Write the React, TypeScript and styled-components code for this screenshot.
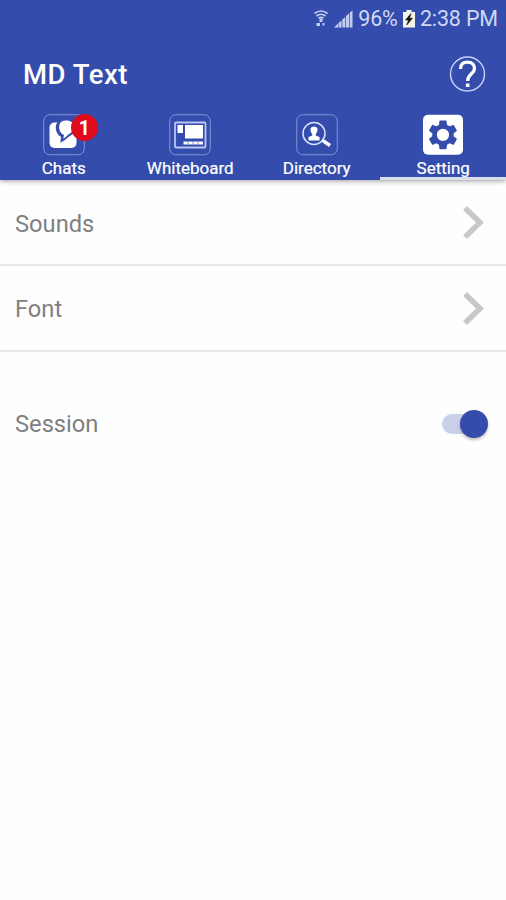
import React from "react";
import styled, { createGlobalStyle } from "styled-components";

const BLUE = "#344dad";

const GlobalStyle = createGlobalStyle`
  * { box-sizing: border-box; }
  body { margin: 0; background: #fefefe; font-family: Roboto, "Liberation Sans", sans-serif; }
  svg { display: block; flex: none; }
`;

const Screen = styled.main`
  width: 506px;
  height: 900px;
  overflow: hidden;
  background: #fefefe;
`;

const Header = styled.header`
  height: 180px;
  background: ${BLUE};
  box-shadow: 0 1px 5px rgba(0, 0, 0, 0.4);
  display: flex;
  flex-direction: column;
`;

const StatusBar = styled.div`
  height: 37px;
  padding: 0 8px 0 313px;
  display: flex;
  align-items: center;
  justify-content: space-between;
  color: #d0d8f5;
`;

const StatusText = styled.span`
  font-size: 21.5px;
  line-height: 37px;
  white-space: nowrap;
  letter-spacing: -0.15px;
`;

const TitleBar = styled.div`
  height: 75px;
  padding: 0 20px 0 23px;
  display: flex;
  align-items: center;
  justify-content: space-between;
`;

const Title = styled.h1`
  margin: 0;
  font-size: 27.5px;
  font-weight: 500;
  line-height: 75px;
  letter-spacing: 0.5px;
  color: #fff;
`;

const HelpButton = styled.button`
  padding: 0;
  border: 0;
  background: none;
`;

const Tabs = styled.nav`
  height: 68px;
  display: grid;
  grid-template-columns: repeat(4, 126.5px);
`;

const Tab = styled.div<{ $active?: boolean }>`
  padding: 2px 0 0 1px;
  display: flex;
  flex-direction: column;
  align-items: center;
  box-shadow: ${(p) => (p.$active ? "inset 0 -3px 0 #d9dcea" : "none")};
`;

const IconWrap = styled.div`
  position: relative;
  height: 42px;
`;

const TabLabel = styled.span`
  height: 22px;
  line-height: 25px;
  font-size: 17px;
  color: #fff;
  -webkit-text-stroke: 0.2px #fff;
`;

const Badge = styled.span`
  position: absolute;
  left: 28px;
  top: 0;
  width: 27px;
  height: 27px;
  border-radius: 50%;
  background: #df0b1c;
  color: #fff;
  font-size: 19.5px;
  font-weight: 700;
  line-height: 29px;
  text-align: center;
`;

const Row = styled.div<{ $height: number; $divided?: boolean }>`
  height: ${(p) => p.$height}px;
  padding: ${(p) => (p.$divided ? "1px 18px 0 15px" : "0 18px 2px 15px")};
  display: flex;
  align-items: center;
  justify-content: space-between;
  border-bottom: ${(p) => (p.$divided ? "2px solid #e7e7e7" : "0")};
`;

const RowLabel = styled.span<{ $shift?: number }>`
  padding-top: ${(p) => p.$shift ?? 0}px;
  font-size: 23.7px;
  color: #808080;
`;

const Gap = styled.div`
  height: 30px;
`;

const Track = styled.div`
  width: 46px;
  height: 20px;
  display: flex;
  align-items: center;
  justify-content: flex-end;
  border-radius: 10px;
  background: linear-gradient(90deg, #cbd0e9 36px, transparent 36px);
`;

const Thumb = styled.div`
  width: 28px;
  height: 28px;
  border-radius: 50%;
  background: ${BLUE};
  box-shadow: 0 2px 3px rgba(0, 0, 0, 0.25);
`;

const Frame = () => (
  <rect x="0.75" y="0.75" width="40.5" height="40" rx="6" fill="none" stroke="#8493d6" strokeWidth="1" />
);

const WifiIcon = () => (
  <svg width="16" height="19" viewBox="0 0 16 19" fill="none" stroke="#c3ccef">
    <path d="M1.5 4.500Q8 -.5 14.5 4.500M3.500 7Q8 3.500 12.500 7M5.500 9.300Q8 7.500 10.500 9.300" strokeWidth="1.700" />
    <path d="M6.500 9.500h3v3.500h-3zM3.500 14h3.500v3H3.500zM9.500 14h2v2.500h-2z" fill="#c3ccef" stroke="none" />
  </svg>
);

const SignalIcon = () => (
  <svg width="19" height="18" viewBox="0 0 19 18" fill="#c3ccef">
    <path d="M0 17.500l4-4v4zM4.500 13l3-2.500v7h-3zM8.300 9.500l3-2.500v10.500h-3zM12 6l3-2.500v14h-3zM15.700 2.500L18.500.5v17h-2.800z" />
  </svg>
);

const BatteryIcon = () => (
  <svg width="12" height="18" viewBox="0 0 12 18">
    <path d="M3.500 0h5v2H12v15.500H0V2h3.500z" fill="#f4f5e9" />
    <path d="M8 3.500L2.500 10h3L3.800 15 9.500 8.200H6.600z" fill="#111" stroke="#111" strokeWidth=".6" />
  </svg>
);

const HelpIcon = () => (
  <svg width="37" height="38" viewBox="0 0 37 38" fill="none">
    <circle cx="18.500" cy="18" r="17" stroke="#c9d2f7" strokeWidth="1.400" />
    <path d="M11.500 13C11.500 8 14 6.200 18.500 6.200C23 6.200 25.500 8.800 25.500 12.500C25.500 18 18.700 17.800 18.700 25" stroke="#fff" strokeWidth="3.300" />
    <path d="M16.800 27.500h3.700v3.500h-3.700z" fill="#fff" />
  </svg>
);

const ChatsIcon = () => (
  <svg width="42" height="42" viewBox="0 0 42 42">
    <Frame />
    <rect x="6.500" y="8.500" width="27" height="25.500" rx="5" fill="#fff" />
    <path d="M23 5C14 5 12 11 13 16C13.800 19.500 15.500 21.500 18 22.800L17.300 28.500C21.500 26.800 24 24.500 26 22.500C31 20 33.500 16 33 11C32 7 28 5 23 5z" fill={BLUE} />
    <path d="M23 6.500C16.500 6.500 15.500 11.500 16.500 15.500C17.300 18.800 19 20.300 21 21L20.300 24.500C22.500 23.500 24 22 25 20.700C29 19 31 15.500 30.500 11C30 8 27 6.500 23 6.500z" fill="#fff" />
  </svg>
);

const WhiteboardIcon = () => (
  <svg width="42" height="42" viewBox="0 0 42 42">
    <Frame />
    <rect x="6" y="8.500" width="30.500" height="25" rx="1" fill="none" stroke="#b9c5f5" strokeWidth="1.800" />
    <path d="M8.500 11h5.500v8H8.500zM16 11h18v13.500H16zM14.500 27.500h19.500v3H14.500z" fill="#fff" />
    <path d="M19 27.500v3M24 27.500v3M29 27.500v3" stroke={BLUE} strokeWidth=".6" />
  </svg>
);

const DirectoryIcon = () => (
  <svg width="42" height="42" viewBox="0 0 42 42" fill="none">
    <Frame />
    <circle cx="18" cy="19.500" r="11" stroke="#dae1ff" strokeWidth="1.500" />
    <path d="M26 26l2 2" stroke="#fff" strokeWidth="2" />
    <path d="M27.500 27l6.500 4.500" stroke="#fff" strokeWidth="3.500" />
    <path d="M14.500 15C14.500 11.500 21.500 11.500 21.500 15C21.500 17.500 20.800 19 19.700 20.200V21.500L23.500 23V26.500H12.500V23L16.300 21.500V20.200C15.200 19 14.500 17.500 14.500 15z" fill="#fff" />
  </svg>
);

const SettingIcon = () => (
  <svg width="42" height="42" viewBox="0 0 42 42">
    <rect x="1" y="0.800" width="40" height="40" rx="5" fill="#fff" />
    <path
      transform="translate(3.800 3.700) scale(1.430)"
      fillRule="evenodd"
      fill={BLUE}
      d="M19.430 12.980c.040-.320.070-.640.070-.980s-.030-.660-.070-.980l2.110-1.650c.190-.150.240-.420.120-.640l-2-3.460c-.120-.220-.390-.300-.610-.220l-2.490 1c-.520-.400-1.080-.730-1.690-.980l-.380-2.650C14.460 2.180 14.250 2 14 2h-4c-.250 0-.460.180-.490.420l-.380 2.650c-.610.250-1.170.590-1.690.980l-2.490-1c-.230-.090-.490 0-.610.220l-2 3.460c-.130.220-.070.490.120.640l2.110 1.650c-.040.320-.070.650-.070.980s.030.660.070.980l-2.110 1.650c-.190.150-.240.420-.120.640l2 3.460c.120.220.390.300.610.220l2.490-1c.520.400 1.080.730 1.690.980l.380 2.650c.030.240.240.420.490.420h4c.250 0 .460-.180.490-.420l.380-2.650c.610-.250 1.170-.590 1.690-.980l2.490 1c.230.090.490 0 .610-.220l2-3.460c.120-.220.070-.490-.120-.640zM12 16.300a4.300 4.300 0 1 1 0-8.600a4.300 4.300 0 0 1 0 8.600z"
    />
  </svg>
);

const Chevron = () => (
  <svg width="28" height="36" viewBox="0 0 28 36" fill="none">
    <path d="M5 3L20 17.500L5 32" stroke="#c8c8c8" strokeWidth="5.500" />
  </svg>
);

export default function App() {
  return (
    <>
      <GlobalStyle />
      <Screen>
        <Header>
          <StatusBar>
            <WifiIcon />
            <SignalIcon />
            <StatusText>96%</StatusText>
            <BatteryIcon />
            <StatusText>2:38 PM</StatusText>
          </StatusBar>
          <TitleBar>
            <Title>MD Text</Title>
            <HelpButton aria-label="Help">
              <HelpIcon />
            </HelpButton>
          </TitleBar>
          <Tabs>
            <Tab>
              <IconWrap>
                <ChatsIcon />
                <Badge>1</Badge>
              </IconWrap>
              <TabLabel>Chats</TabLabel>
            </Tab>
            <Tab>
              <IconWrap><WhiteboardIcon /></IconWrap>
              <TabLabel>Whiteboard</TabLabel>
            </Tab>
            <Tab>
              <IconWrap><DirectoryIcon /></IconWrap>
              <TabLabel>Directory</TabLabel>
            </Tab>
            <Tab $active>
              <IconWrap><SettingIcon /></IconWrap>
              <TabLabel>Setting</TabLabel>
            </Tab>
          </Tabs>
        </Header>
        <Row $height={86} $divided>
          <RowLabel $shift={2}>Sounds</RowLabel>
          <Chevron />
        </Row>
        <Row $height={86} $divided>
          <RowLabel $shift={1}>Font</RowLabel>
          <Chevron />
        </Row>
        <Gap />
        <Row $height={85}>
          <RowLabel>Session</RowLabel>
          <Track>
            <Thumb />
          </Track>
        </Row>
      </Screen>
    </>
  );
}
